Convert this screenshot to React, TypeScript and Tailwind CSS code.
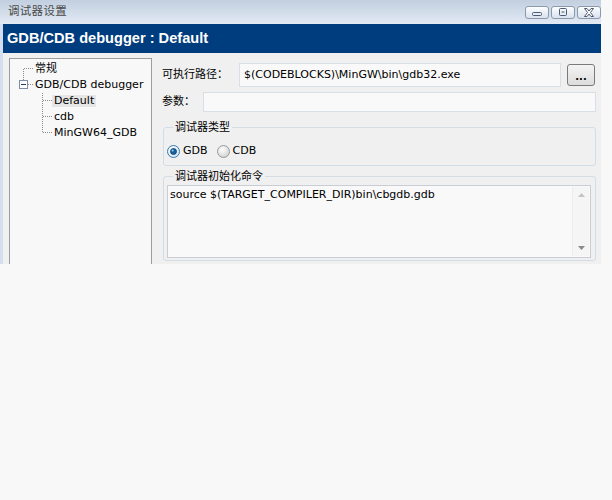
import React from "react"

const font = { fontFamily: '"DejaVu Sans", "Noto Sans CJK SC", sans-serif' }

function WinButton({ kind }: { kind: "min" | "max" | "close" }) {
  return (
    <div className="w-[24px] h-[13px] rounded-[3px] border border-[#8a99ad] bg-gradient-to-b from-[#fdfeff] to-[#d9e2ee] flex items-center justify-center">
      <svg width="14" height="9" viewBox="0 0 14 9">
        {kind === "min" && <rect x="2.5" y="4.5" width="9" height="3" rx="1" fill="none" stroke="#4d5b70" />}
        {kind === "max" && (
          <>
            <rect x="3.5" y="0.5" width="7" height="7" rx="1" fill="none" stroke="#4d5b70" />
            <rect x="5.5" y="3.5" width="3" height="1" fill="#4d5b70" />
          </>
        )}
        {kind === "close" && (
          <path
            d="M2.5 0.5 H5 L7 3 L9 0.5 H11.5 L8.5 4.5 L11.5 8.5 H9 L7 6 L5 8.5 H2.5 L5.5 4.5 Z"
            fill="#fff"
            stroke="#4d5b70"
          />
        )}
      </svg>
    </div>
  )
}

function Radio({ checked }: { checked: boolean }) {
  return (
    <svg width="13" height="13" viewBox="0 0 13 13">
      <defs>
        <radialGradient id={checked ? "rg1" : "rg0"} cx="0.4" cy="0.35" r="0.7">
          <stop offset="0" stopColor="#ffffff" />
          <stop offset="1" stopColor={checked ? "#cfe3f4" : "#cfcfcf"} />
        </radialGradient>
      </defs>
      <circle cx="6.5" cy="6.5" r="6" fill={`url(#${checked ? "rg1" : "rg0"})`} stroke={checked ? "#3d7bad" : "#9a9a9a"} />
      {checked && <circle cx="6.5" cy="6.5" r="3" fill="#17609c" stroke="#0d3f6d" strokeWidth="0.8" />}
      {checked && <circle cx="5.6" cy="5.6" r="1" fill="#8fd0ff" />}
    </svg>
  )
}

function TreeRow({ lines, label, selected }: { lines: React.ReactNode; label: string; selected?: boolean }) {
  return (
    <div className="flex h-[16px] items-center">
      {lines}
      <span className={selected ? "px-[2px] leading-[12px] bg-[#e6e6e6]" : "px-[2px] leading-[12px]"}>{label}</span>
    </div>
  )
}

const dot = { stroke: "#8c8c8c", strokeDasharray: "1 1" }

export default function App() {
  return (
    <div className="w-[612px] h-[500px] bg-[#f8f8f8] text-[11px] text-black" style={font}>
      <div className="w-[601px] flex flex-col">
        {/* Title bar */}
        <div className="h-[24px] flex items-center justify-between pl-[8px] bg-gradient-to-b from-[#c2cfdf] to-[#e2eaf4]">
          <span className="text-[11.5px] text-[#4a4a4a] tracking-[0.3px]">调试器设置</span>
          <div className="flex gap-[2px] pt-[1px]">
            <WinButton kind="min" />
            <WinButton kind="max" />
            <WinButton kind="close" />
          </div>
        </div>

        <div className="flex flex-col border-l-[3px] border-[#d3dfee]">
          {/* Header */}
          <div className="h-[29px] bg-[#003d7e] flex items-center pl-[4px]">
            <span className="text-white font-bold text-[14.6px]" style={{ fontFamily: '"Liberation Sans", sans-serif' }}>
              GDB/CDB debugger : Default
            </span>
          </div>

          {/* Content */}
          <div className="h-[211px] bg-[#f0f0f0] flex pl-[6px] pr-[5px] pt-[5px] gap-[10px]">
            {/* Tree */}
            <div className="w-[143px] border-x border-t border-[#9d9d9d] bg-[#f8f8f8] pt-[2px]">
              <TreeRow
                label="常规"
                lines={
                  <svg width="23" height="16" className="shrink-0">
                    <line x1="13.5" y1="8" x2="13.5" y2="16" style={dot} />
                    <line x1="14" y1="7.5" x2="23" y2="7.5" style={dot} />
                  </svg>
                }
              />
              <TreeRow
                label="GDB/CDB debugger"
                lines={
                  <svg width="23" height="16" className="shrink-0">
                    <line x1="13.5" y1="0" x2="13.5" y2="4" style={dot} />
                    <rect x="9.5" y="3.5" width="8" height="8" fill="#fff" stroke="#7d8ea6" />
                    <line x1="11" y1="7.5" x2="16" y2="7.5" stroke="#1f3a66" />
                    <line x1="18" y1="7.5" x2="23" y2="7.5" style={dot} />
                  </svg>
                }
              />
              {["Default", "cdb", "MinGW64_GDB"].map((n, i) => (
                <TreeRow
                  key={n}
                  label={n}
                  selected={i === 0}
                  lines={
                    <svg width="42" height="16" className="shrink-0">
                      <line x1="32.5" y1="0" x2="32.5" y2={i === 2 ? 8 : 16} style={dot} />
                      <line x1="33" y1="7.5" x2="42" y2="7.5" style={dot} />
                    </svg>
                  }
                />
              ))}
            </div>

            {/* Right panel */}
            <div className="flex-1 flex flex-col pt-[5px]">
              <div className="flex items-center h-[24px]">
                <span className="w-[77px] shrink-0">可执行路径：</span>
                <div className="w-[322px] h-[24px] border border-[#d8dfe7] bg-[#f9f9f9] flex items-center px-[4px]">
                  $(CODEBLOCKS)\MinGW\bin\gdb32.exe
                </div>
                <div className="ml-[6px] w-[28px] h-[22px] rounded-[3px] border border-[#7a7a7a] bg-gradient-to-b from-[#f4f4f4] to-[#dcdcdc] flex items-center justify-center font-bold text-[10px] leading-none pt-[4px]">
                  ...
                </div>
              </div>

              <div className="flex items-center h-[20px] mt-[5px]">
                <span className="w-[41px] shrink-0">参数：</span>
                <div className="flex-1 h-[20px] border border-[#d8dfe7] bg-[#f9f9f9]" />
              </div>

              <fieldset className="mt-[9px] ml-px border border-[#d3dde5] rounded-[3px] pb-[7px] pl-[3px]">
                <legend className="ml-[6px] px-[2px] leading-[13px]">调试器类型</legend>
                <div className="flex items-center h-[14px] mt-[10px] gap-[3px]">
                  <Radio checked />
                  <span className="mr-[6px]">GDB</span>
                  <Radio checked={false} />
                  <span>CDB</span>
                </div>
              </fieldset>

              <fieldset className="mt-[4px] ml-px border border-[#d3dde5] rounded-[3px] pb-[2px] pl-[3px] pr-[4px]">
                <legend className="ml-[6px] px-[2px] leading-[13px]">调试器初始化命令</legend>
                <div className="mt-[2px] h-[73px] border border-[#c9ced5] bg-[#f9f9f9] flex">
                  <div className="flex-1 px-[2px] pt-[2px] leading-[14px]">source $(TARGET_COMPILER_DIR)bin\cbgdb.gdb</div>
                  <div className="w-[17px] my-[1px] mr-px bg-[#f5f5f5] border-l border-[#ececec] flex flex-col justify-between items-center py-[6px]">
                    <svg width="7" height="4" viewBox="0 0 7 4">
                      <path d="M0 4 L3.5 0 L7 4 Z" fill="#c4c4c4" />
                    </svg>
                    <svg width="7" height="4" viewBox="0 0 7 4">
                      <path d="M0 0 L7 0 L3.5 4 Z" fill="#8a8a8a" />
                    </svg>
                  </div>
                </div>
              </fieldset>
            </div>
          </div>
        </div>
      </div>
    </div>
  )
}
